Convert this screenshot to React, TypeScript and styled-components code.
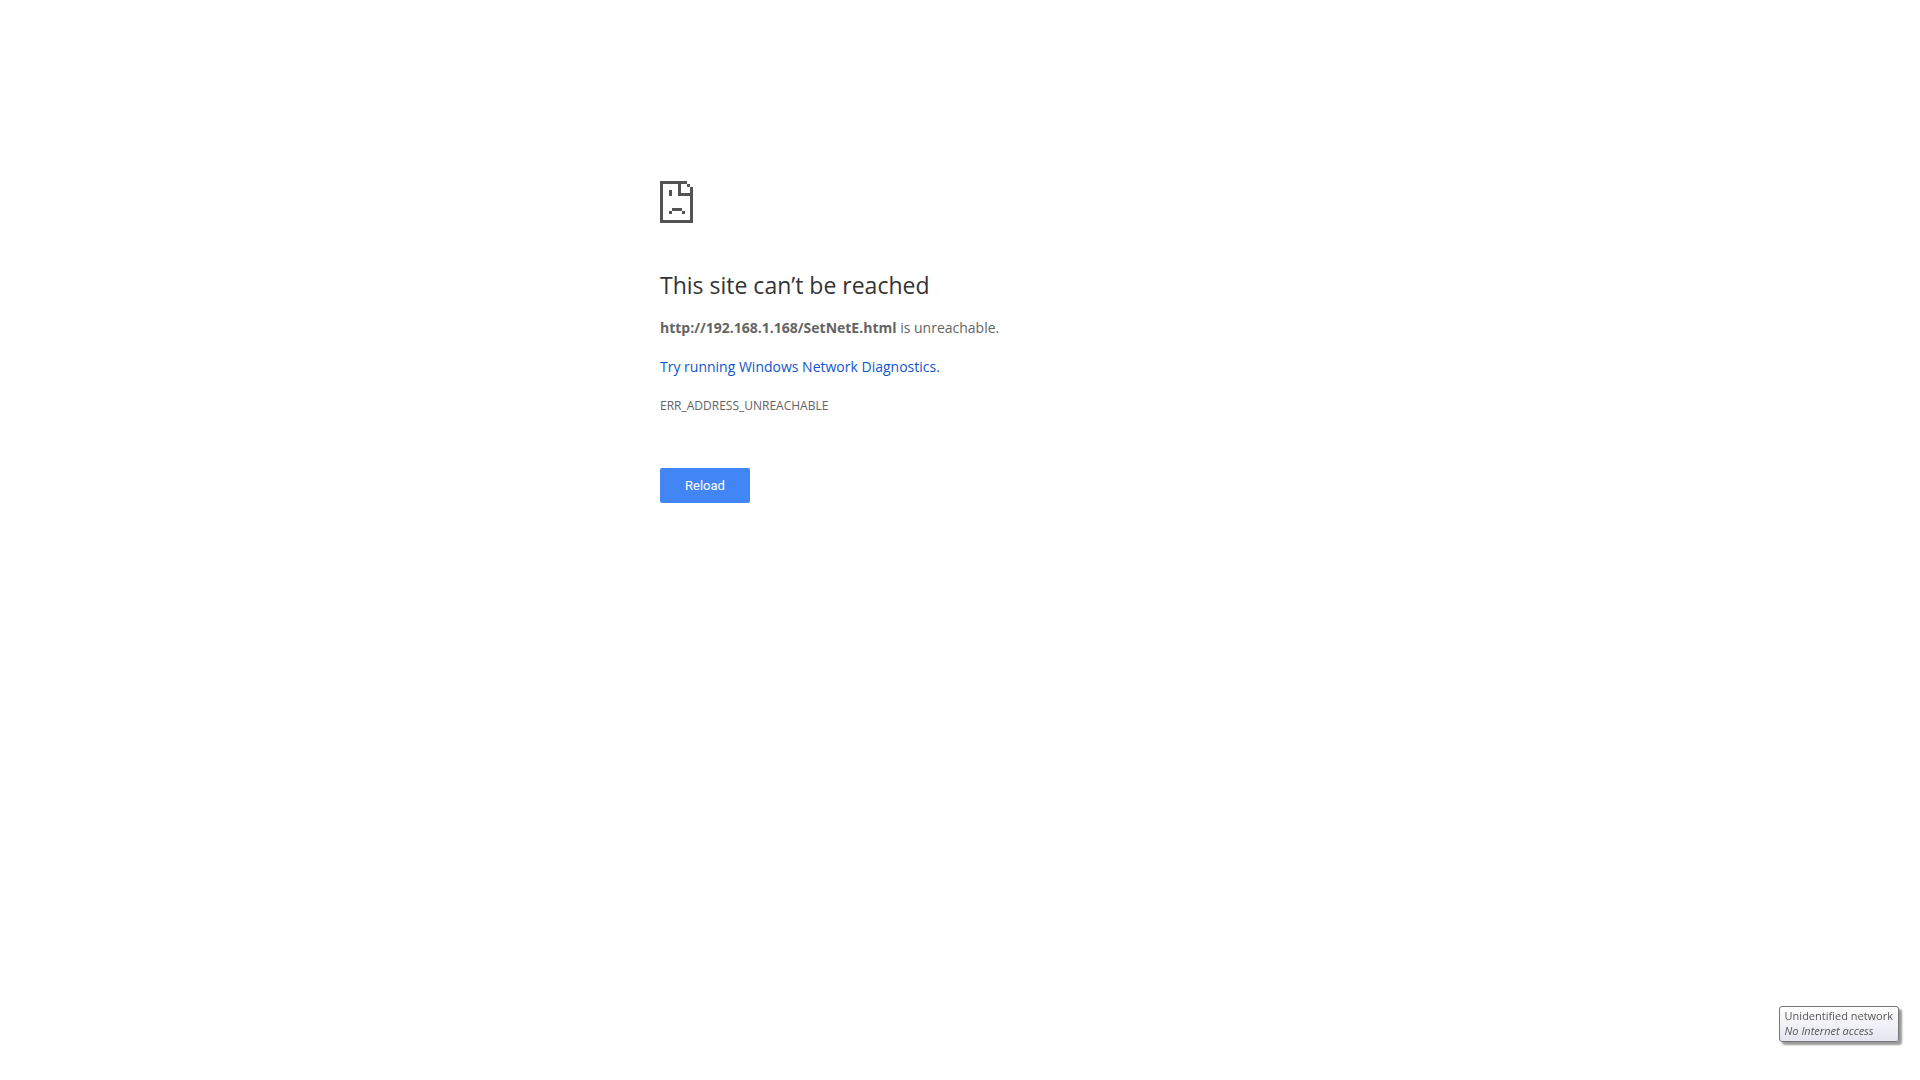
import React from 'react';
import styled, { createGlobalStyle } from 'styled-components';

const Global = createGlobalStyle`
  body { margin: 0; background: #fff; color: #646464; font-family: "Segoe UI", "Open Sans", "Noto Sans", sans-serif; }
`;
const Page = styled.div`
  min-height: 100vh;
  display: flex;
  justify-content: center;
`;
const Main = styled.main`
  box-sizing: border-box;
  width: 100%;
  max-width: 600px;
  padding-top: 181px;
  display: flex;
  flex-direction: column;
  align-items: flex-start;
  font-size: 14px;
  line-height: 24px;
`;
const Icon = styled.svg`
  display: block;
  width: 33px;
  height: 42px;
`;
const Title = styled.h1`
  margin: 46px 0 15px;
  font-size: 23px;
  font-weight: 400;
  line-height: 32px;
  color: #333;
`;
const Text = styled.p`
  margin: 0 0 15px;
`;
const Link = styled.a`
  color: #1155cc;
  text-decoration: none;
`;
const Code = styled.p`
  margin: 0;
  font-size: 12px;
`;
const Reload = styled.button`
  margin-top: 50px;
  min-width: 90px;
  padding: 0 24px;
  border: 0;
  border-radius: 2px;
  background: #4285f4;
  color: #fff;
  font: 13px/35px Roboto, sans-serif;
`;
const Tooltip = styled.div`
  position: fixed;
  right: 21px;
  bottom: 38px;
  padding: 1px 5px 3px;
  border: 1px solid #767676;
  border-radius: 3px;
  background: linear-gradient(#fff, #e4e5f0);
  box-shadow: 3px 3px 2px rgba(0, 0, 0, 0.4);
  font-size: 11px;
  line-height: 15px;
  color: #575757;
`;
const Status = styled.em`
  display: block;
`;

export default function App() {
  return (
    <Page>
      <Global />
      <Main>
        <Icon viewBox="0 0 33 42" shapeRendering="crispEdges" aria-hidden="true">
          <path
            fill="#535353"
            d="M0 0h27v3H0z M0 3h3v36H0z M0 39h33v3H0z M30 6h3v33h-3z M27 3h3v3h-3z M18 3h3v9h-3z M18 12h12v3H18z M9 9h3v6H9z M12 27h10v3H12z M9 30h3v3H9z M22 30h3v3h-3z"
          />
        </Icon>
        <Title>This site can’t be reached</Title>
        <Text><strong>http://192.168.1.168/SetNetE.html</strong> is unreachable.</Text>
        <Text><Link href="#diagnostics">Try running Windows Network Diagnostics.</Link></Text>
        <Code>ERR_ADDRESS_UNREACHABLE</Code>
        <Reload type="button">Reload</Reload>
      </Main>
      <Tooltip role="tooltip">Unidentified network<Status>No Internet access</Status></Tooltip>
    </Page>
  );
}
